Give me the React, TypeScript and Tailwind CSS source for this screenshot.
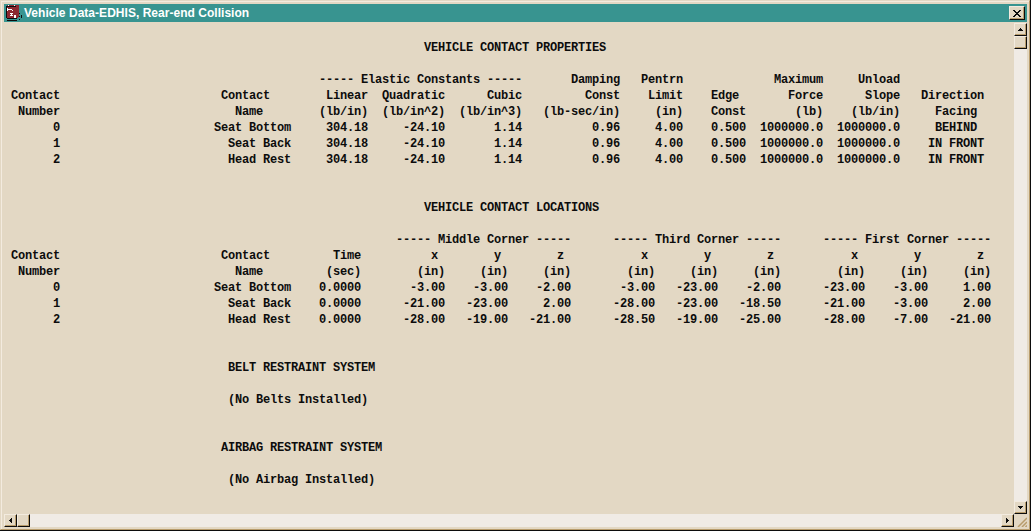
type Cell = [col: number, text: string];

// Each report line is a list of [column, text] pairs on a 7px character grid.
const report: Cell[][] = [
  [],
  [[60, 'VEHICLE CONTACT PROPERTIES']],
  [],
  [[45, '----- Elastic Constants -----'], [81, 'Damping'], [91, 'Pentrn'], [110, 'Maximum'], [122, 'Unload']],
  [[1, 'Contact'], [31, 'Contact'], [46, 'Linear'], [54, 'Quadratic'], [69, 'Cubic'], [83, 'Const'], [92, 'Limit'], [101, 'Edge'], [112, 'Force'], [123, 'Slope'], [131, 'Direction']],
  [[2, 'Number'], [33, 'Name'], [45, '(lb/in)'], [54, '(lb/in^2)'], [65, '(lb/in^3)'], [77, '(lb-sec/in)'], [93, '(in)'], [101, 'Const'], [113, '(lb)'], [121, '(lb/in)'], [133, 'Facing']],
  [[7, '0'], [30, 'Seat Bottom'], [46, '304.18'], [57, '-24.10'], [70, '1.14'], [84, '0.96'], [93, '4.00'], [101, '0.500'], [108, '1000000.0'], [119, '1000000.0'], [133, 'BEHIND']],
  [[7, '1'], [32, 'Seat Back'], [46, '304.18'], [57, '-24.10'], [70, '1.14'], [84, '0.96'], [93, '4.00'], [101, '0.500'], [108, '1000000.0'], [119, '1000000.0'], [132, 'IN FRONT']],
  [[7, '2'], [32, 'Head Rest'], [46, '304.18'], [57, '-24.10'], [70, '1.14'], [84, '0.96'], [93, '4.00'], [101, '0.500'], [108, '1000000.0'], [119, '1000000.0'], [132, 'IN FRONT']],
  [],
  [],
  [[60, 'VEHICLE CONTACT LOCATIONS']],
  [],
  [[56, '----- Middle Corner -----'], [87, '----- Third Corner -----'], [117, '----- First Corner -----']],
  [[1, 'Contact'], [31, 'Contact'], [47, 'Time'], [61, 'x'], [70, 'y'], [79, 'z'], [91, 'x'], [100, 'y'], [109, 'z'], [121, 'x'], [130, 'y'], [139, 'z']],
  [[2, 'Number'], [33, 'Name'], [46, '(sec)'], [59, '(in)'], [68, '(in)'], [77, '(in)'], [89, '(in)'], [98, '(in)'], [107, '(in)'], [119, '(in)'], [128, '(in)'], [137, '(in)']],
  [[7, '0'], [30, 'Seat Bottom'], [45, '0.0000'], [58, '-3.00'], [67, '-3.00'], [76, '-2.00'], [88, '-3.00'], [96, '-23.00'], [106, '-2.00'], [117, '-23.00'], [127, '-3.00'], [137, '1.00']],
  [[7, '1'], [32, 'Seat Back'], [45, '0.0000'], [57, '-21.00'], [66, '-23.00'], [77, '2.00'], [87, '-28.00'], [96, '-23.00'], [105, '-18.50'], [117, '-21.00'], [127, '-3.00'], [137, '2.00']],
  [[7, '2'], [32, 'Head Rest'], [45, '0.0000'], [57, '-28.00'], [66, '-19.00'], [75, '-21.00'], [87, '-28.50'], [96, '-19.00'], [105, '-25.00'], [117, '-28.00'], [127, '-7.00'], [135, '-21.00']],
  [],
  [],
  [[32, 'BELT RESTRAINT SYSTEM']],
  [],
  [[32, '(No Belts Installed)']],
  [],
  [],
  [[31, 'AIRBAG RESTRAINT SYSTEM']],
  [],
  [[32, '(No Airbag Installed)']],
];

const toLine = (cells: Cell[]) => cells.reduce((line, [col, text]) => line.padEnd(col) + text, '');

const bevel =
  'shrink-0 bg-[#e3d8c4] border border-t-[#f3ebdf] border-l-[#f3ebdf] border-r-[#0c0c0c] border-b-[#0c0c0c] shadow-[inset_-1px_-1px_0_#b89c6c]';

const arrows = {
  up: 'M2 0h1v1h1v1h1v1H0V2h1V1h1z',
  down: 'M0 0h5v1H4v1H3v1H2V2H1V1H0z',
  left: 'M2 0h1v5H2V4H1V3H0V2h1V1h1z',
  right: 'M0 0h1v1h1v1h1v1H2v1H1v1H0z',
};

function ArrowButton({ dir }: { dir: keyof typeof arrows }) {
  const vertical = dir === 'up' || dir === 'down';
  return (
    <button aria-label={dir} className={`flex h-[13px] w-[13px] items-center justify-center ${bevel}`}>
      <svg width={vertical ? 5 : 3} height={vertical ? 3 : 5} fill="#0c0c0c" shapeRendering="crispEdges">
        <path d={arrows[dir]} />
      </svg>
    </button>
  );
}

function AppIcon() {
  return (
    <svg width="18" height="18" shapeRendering="crispEdges">
      <path fill="#8c2830" d="M3 1h12v12h-1v1H3z" />
      <path fill="#0c0c0c" d="M2 2h1v12H2zM3 2h9v1H3zM3 14h10v1H3zM3 16h10v1H3zM15 9h1v1h-1zM17 11h1v3h-1zM15 12h1v1h-1zM15 15h1v1h-1z" />
      <path fill="#fff" d="M3 4h1v3H3zM4 5h4v1H4zM8 6h1v1H8zM6 9h3v1H6zM7 10h1v1H7zM6 11h3v1H6zM10 11h2v3h-2zM4 1h1v1H4zM10 1h1v1h-1z" />
    </svg>
  );
}

export default function App() {
  return (
    <div className="h-[531px] w-[1031px] overflow-hidden border-r border-b border-[#0c0c0c] bg-[#e3d8c4]">
      <div className="flex h-[530px] w-[1030px] flex-col border border-t-[#e3d8c4] border-l-[#e3d8c4] border-r-[#b89c6c] border-b-[#b89c6c]">
        <div className="flex h-full flex-col border-t border-l border-[#f3ebdf] pt-[2px] pl-[2px]">
          <div className="flex h-[18px] w-[1023px] shrink-0 items-center bg-[#389490] pr-[2px]">
            <AppIcon />
            <h1 className="ml-[2px] flex-1 font-['Liberation_Sans'] text-[12px] leading-[18px] font-bold tracking-[0.03px] whitespace-nowrap text-white">
              Vehicle Data-EDHIS, Rear-end Collision
            </h1>
            <button aria-label="Close" className={`flex h-[14px] w-4 items-center justify-center ${bevel}`}>
              <svg width="8" height="7" fill="#0c0c0c" shapeRendering="crispEdges">
                <path d="M0 0h2v1h1v1h2V1h1V0h2v1H7v1H6v1H5v1h1v1h1v1h1v1H6V6H5V5H3v1H2v1H0V6h1V5h1V4h1V3H2V2H1V1H0z" />
              </svg>
            </button>
          </div>

          <div className="flex h-[492px] w-[1023px] shrink-0 pt-px">
            <div className="flex-1 overflow-hidden pt-px font-['Liberation_Mono',monospace] text-[12px] leading-4 font-bold tracking-[-0.2012px] text-[#0c0c0c]">
              {report.map((cells, i) => (
                <div key={i} className="h-4 whitespace-pre">{toLine(cells)}</div>
              ))}
            </div>
            <div className="flex w-[13px] shrink-0 flex-col bg-[#f0ebe5]">
              <ArrowButton dir="up" />
              <div className={`h-[13px] w-[13px] ${bevel}`} />
              <div className="flex-1" />
              <ArrowButton dir="down" />
            </div>
          </div>

          <div className="flex h-[13px] w-[1023px] shrink-0">
            <div className="flex w-[1010px] shrink-0 bg-[#f0ebe5]">
              <ArrowButton dir="left" />
              <div className={`h-[13px] w-[13px] ${bevel}`} />
              <div className="flex-1" />
              <ArrowButton dir="right" />
            </div>
            <svg width="13" height="13" stroke="#b89c6c" strokeWidth="1.5">
              <path d="M4 13l9-9M8 13l5-5M11.5 13l1.5-1.5" />
            </svg>
          </div>
        </div>
      </div>
    </div>
  );
}
